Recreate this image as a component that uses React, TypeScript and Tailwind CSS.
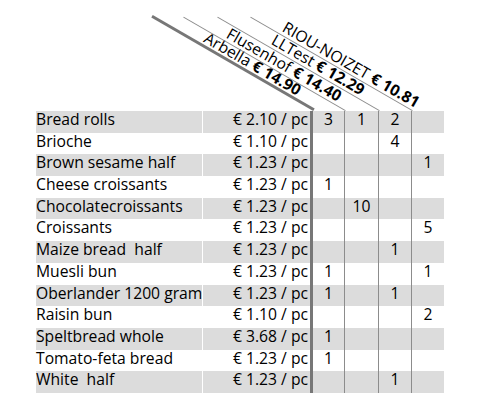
import React from "react";

type Row = { name: string; price: string; q: string[] };

const rows: Row[] = [
  { name: "Bread rolls", price: "€ 2.10 / pc", q: ["3", "1", "2", ""] },
  { name: "Brioche", price: "€ 1.10 / pc", q: ["", "", "4", ""] },
  { name: "Brown sesame half", price: "€ 1.23 / pc", q: ["", "", "", "1"] },
  { name: "Cheese croissants", price: "€ 1.23 / pc", q: ["1", "", "", ""] },
  { name: "Chocolatecroissants", price: "€ 1.23 / pc", q: ["", "10", "", ""] },
  { name: "Croissants", price: "€ 1.23 / pc", q: ["", "", "", "5"] },
  { name: "Maize bread  half", price: "€ 1.23 / pc", q: ["", "", "1", ""] },
  { name: "Muesli bun", price: "€ 1.23 / pc", q: ["1", "", "", "1"] },
  { name: "Oberlander 1200 gram", price: "€ 1.23 / pc", q: ["1", "", "1", ""] },
  { name: "Raisin bun", price: "€ 1.10 / pc", q: ["", "", "", "2"] },
  { name: "Speltbread whole", price: "€ 3.68 / pc", q: ["1", "", "", ""] },
  { name: "Tomato-feta bread", price: "€ 1.23 / pc", q: ["1", "", "", ""] },
  { name: "White  half", price: "€ 1.23 / pc", q: ["", "", "1", ""] },
];

const suppliers = [
  { name: "Arbella", price: "€ 14.90" },
  { name: "Flusenhof", price: "€ 14.40" },
  { name: "LLTest", price: "€ 12.29" },
  { name: "RIOU-NOIZET", price: "€ 10.81" },
];

const colW = ["w-[34px]", "w-[34px]", "w-[33px]", "w-[33px]"];
const colBorder = [
  "border-l-[3px] border-[#777777]",
  "border-l border-[#8c8c8c]",
  "border-l border-[#8c8c8c]",
  "border-l border-[#8c8c8c]",
];

function HeaderCell({ i }: { i: number }) {
  const s = suppliers[i];
  const thick = i === 0;
  return (
    <div className={`relative h-[111px] shrink-0 ${colW[i]}`}>
      <div
        className={`absolute bottom-0 w-[187px] origin-bottom-right rotate-[30deg] flex justify-end ${
          thick
            ? "right-[calc(100%-3px)] border-b-[3px] border-[#777777]"
            : "right-[calc(100%-1px)] border-b border-[#8c8c8c]"
        }`}
      >
        <div
          className={`w-[152px] flex justify-center whitespace-nowrap text-[15.7px] leading-[21.4px] text-black ${
            thick ? "translate-y-[3px]" : "translate-y-[2px]"
          }`}
        >
          <span>
            {s.name} <b className="font-bold">{s.price}</b>
          </span>
        </div>
      </div>
    </div>
  );
}

export default function App() {
  return (
    <div className="w-[478px] h-[416px] bg-white overflow-hidden font-['Open_Sans',sans-serif] text-black">
      <div className="flex pl-[36px]">
        <div className="w-[274px] shrink-0 h-[111px]" />
        {suppliers.map((_, i) => (
          <HeaderCell key={i} i={i} />
        ))}
      </div>
      <div className="flex flex-col pl-[36px]">
        {rows.map((r, ri) => {
          const bg = ri % 2 === 0 ? "bg-[#dcdcdc]" : "bg-white";
          return (
            <div key={ri} className="flex h-[21.7px] text-[15.7px] leading-[17.7px]">
              <div className={`w-[166px] shrink-0 whitespace-pre ${bg}`}>{r.name}</div>
              <div className="w-[1px] shrink-0 bg-white" />
              <div className={`w-[107px] shrink-0 text-right pr-[2px] whitespace-nowrap ${bg}`}>
                {r.price}
              </div>
              {r.q.map((v, ci) => (
                <div
                  key={ci}
                  className={`shrink-0 text-center ${colW[ci]} ${colBorder[ci]} ${bg}`}
                >
                  {v}
                </div>
              ))}
            </div>
          );
        })}
      </div>
    </div>
  );
}
